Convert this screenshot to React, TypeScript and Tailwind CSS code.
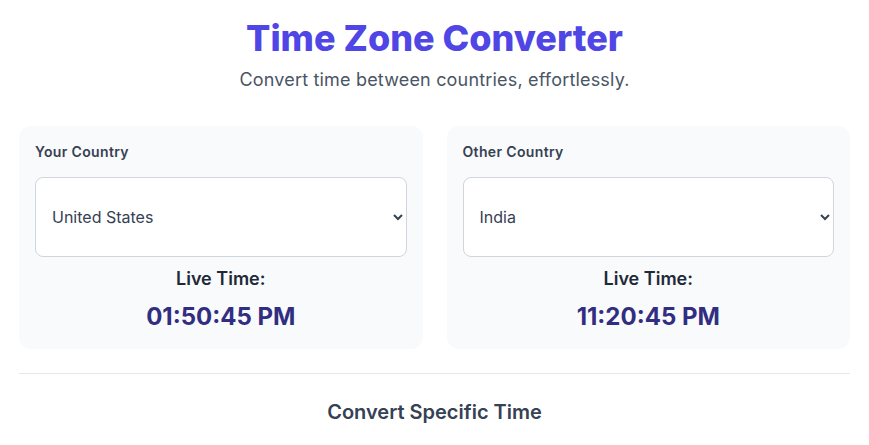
import React, { useState } from 'react';

const countries = ['United States', 'India', 'United Kingdom', 'Japan', 'Australia', 'Germany'];

function CountryCard({
  label,
  value,
  onChange,
  time,
}: {
  label: string;
  value: string;
  onChange: (v: string) => void;
  time: string;
}) {
  return (
    <div className="bg-gray-50 rounded-xl p-4">
      <label className="block text-sm font-semibold tracking-wide text-gray-700 mb-[15px]">{label}</label>
      <select
        value={value}
        onChange={(e) => onChange(e.target.value)}
        className="w-full h-20 pl-3 pr-1 text-base text-gray-700 bg-white border border-gray-300 rounded-lg"
      >
        {countries.map((c) => (
          <option key={c}>{c}</option>
        ))}
      </select>
      <div className="mt-2 text-center">
        <p className="text-lg font-semibold text-gray-800">Live Time:</p>
        <p className="mt-2 text-2xl font-bold text-[#312e81]">{time}</p>
      </div>
    </div>
  );
}

export default function App() {
  const [yours, setYours] = useState('United States');
  const [other, setOther] = useState('India');

  return (
    <div className="min-h-screen bg-white font-['Inter',sans-serif] px-[19px] pt-[18px]">
      <h1 className="text-4xl font-extrabold text-[#4f46e5] text-center mb-2">Time Zone Converter</h1>
      <p className="text-lg text-gray-600 text-center mb-8 tracking-[0.01em]">
        Convert time between countries, effortlessly.
      </p>

      <div className="grid grid-cols-2 gap-6">
        <CountryCard label="Your Country" value={yours} onChange={setYours} time="01:50:45 PM" />
        <CountryCard label="Other Country" value={other} onChange={setOther} time="11:20:45 PM" />
      </div>

      <div className="mt-6 border-t border-gray-200 pt-6">
        <h2 className="text-xl font-semibold text-gray-700 text-center">Convert Specific Time</h2>
      </div>
    </div>
  );
}
